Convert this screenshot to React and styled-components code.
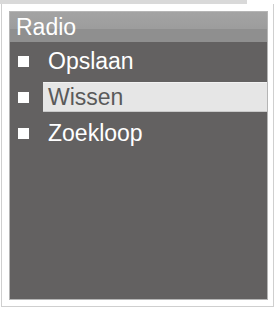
import React from 'react';
import styled, { createGlobalStyle } from 'styled-components';

const Global = createGlobalStyle`
  html, body { margin: 0; padding: 0; background: #ffffff; }
  body { font-family: "Liberation Sans", Arial, sans-serif; }
`;

const Screen = styled.div`
  width: 276px;
  height: 312px;
  background: #ffffff;
  overflow: hidden;
`;

const TopStrip = styled.div`
  width: 247px;
  height: 4px;
  background: #d9d9d9;
`;

const Frame = styled.div`
  margin: 0 2px 0 1px;
  height: 303px;
  border: 1px solid #cfcfcf;
  border-top: none;
  padding: 7px 5px 6px 7px;
  box-sizing: border-box;
  display: flex;
`;

const Panel = styled.div`
  flex: 1;
  display: flex;
  flex-direction: column;
  background: #636161;
  border: 1px solid #b5b5b5;
`;

const Header = styled.div`
  height: 30px;
  padding-left: 6px;
  display: flex;
  align-items: center;
  color: #ffffff;
  font-size: 23px;
  background: linear-gradient(#a3a3a3 0%, #9d9d9d 55%, #8f8f8f 56%, #8f8f8f 100%);
`;

const List = styled.div`
  display: flex;
  flex-direction: column;
  padding-top: 1px;
`;

const Row = styled.div`
  height: 36px;
  display: flex;
  align-items: center;
`;

const Bullet = styled.span`
  width: 11px;
  height: 11px;
  margin: 0 14px 0 8px;
  background: #ffffff;
  flex: none;
`;

const Label = styled.span`
  flex: 1;
  height: 28px;
  display: flex;
  align-items: center;
  padding-left: 5px;
  font-size: 23px;
  color: ${({ selected }) => (selected ? '#5a5a5a' : '#ffffff')};
  background: ${({ selected }) => (selected ? '#e6e6e6' : 'transparent')};
  border-top: 1px solid ${({ selected }) => (selected ? '#f2f2f2' : 'transparent')};
  border-bottom: 1px solid ${({ selected }) => (selected ? '#c9c9c9' : 'transparent')};
`;

const items = ['Opslaan', 'Wissen', 'Zoekloop'];

export default function App() {
  return (
    <Screen>
      <Global />
      <TopStrip />
      <Frame>
        <Panel>
          <Header>Radio</Header>
          <List>
            {items.map((item, i) => (
              <Row key={item}>
                <Bullet />
                <Label selected={i === 1}>{item}</Label>
              </Row>
            ))}
          </List>
        </Panel>
      </Frame>
    </Screen>
  );
}
